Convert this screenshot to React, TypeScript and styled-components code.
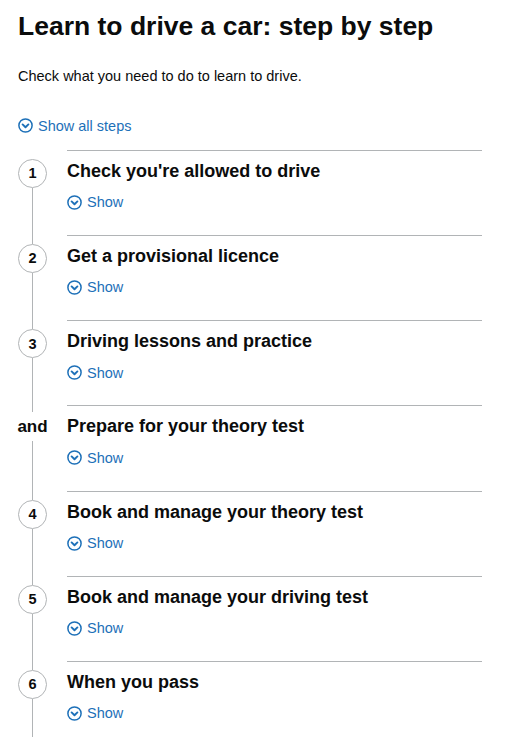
import React from "react"
import styled, { createGlobalStyle } from "styled-components"

const GlobalStyle = createGlobalStyle`
    body {
        margin: 0;
        background: #ffffff;
        font-family: "Liberation Sans", Arial, sans-serif;
        color: #0b0c0c;
    }
`

const Page = styled.div`
    padding: 0 28px 0 18px;
`

const Title = styled.h1`
    margin: 11px 0 0 0;
    font-size: 26.5px;
    line-height: 1.2;
    font-weight: 700;
`

const Lead = styled.p`
    margin: 23px 0 0 0;
    font-size: 14.5px;
    line-height: 20px;
`

const ShowLink = styled.a<{ $top?: string }>`
    display: flex;
    align-items: center;
    gap: 5px;
    margin-top: ${({ $top }) => $top || "0"};
    font-size: 14.5px;
    line-height: 20px;
    color: #1d70b8;
    text-decoration: none;
    cursor: pointer;
    width: max-content;
`

const Steps = styled.ol`
    list-style: none;
    margin: 14px 0 0 0;
    padding: 0;
`

const Step = styled.li`
    display: grid;
    grid-template-columns: 29px 1fr;
    column-gap: 20px;
`

const Rail = styled.div`
    display: flex;
    flex-direction: column;
    align-items: center;
`

const Segment = styled.div<{ $blank?: boolean; $size?: string }>`
    width: 1px;
    background: ${({ $blank }) => ($blank ? "transparent" : "#b1b4b6")};
    height: ${({ $size }) => $size || "auto"};
    flex: ${({ $size }) => ($size ? "none" : "1")};
`

const Number = styled.span`
    box-sizing: border-box;
    width: 29px;
    height: 29px;
    border: 1px solid #b1b4b6;
    border-radius: 50%;
    display: flex;
    align-items: center;
    justify-content: center;
    font-size: 14.5px;
    font-weight: 700;
    background: #fff;
`

const And = styled.span`
    height: 29px;
    display: flex;
    align-items: center;
    justify-content: center;
    white-space: nowrap;
    font-size: 17px;
    font-weight: 700;
`

const Body = styled.div`
    border-top: 1px solid #b1b4b6;
    padding: 8px 0 22.7px 0;
`

const StepTitle = styled.h2`
    margin: 0;
    font-size: 18px;
    line-height: 24px;
    font-weight: 700;
`

const ChevronIcon: React.FC = () => (
    <svg width="15" height="15" viewBox="0 0 15 15" aria-hidden="true">
        <circle cx="7.5" cy="7.5" r="6.6" fill="none" stroke="#1d70b8" strokeWidth="1.5" />
        <path d="M4.6 6.4 L7.5 9.2 L10.4 6.4" fill="none" stroke="#1d70b8" strokeWidth="1.9" strokeLinecap="round" strokeLinejoin="round" />
    </svg>
)

const steps: { label: string; title: string }[] = [
    { label: "1", title: "Check you're allowed to drive" },
    { label: "2", title: "Get a provisional licence" },
    { label: "3", title: "Driving lessons and practice" },
    { label: "and", title: "Prepare for your theory test" },
    { label: "4", title: "Book and manage your theory test" },
    { label: "5", title: "Book and manage your driving test" },
    { label: "6", title: "When you pass" },
]

export default function App() {
    return (
        <Page>
            <GlobalStyle />
            <Title>Learn to drive a car: step by step</Title>
            <Lead>Check what you need to do to learn to drive.</Lead>
            <ShowLink $top="30px">
                <ChevronIcon />
                Show all steps
            </ShowLink>
            <Steps>
                {steps.map((step, i) => (
                    <Step key={step.title}>
                        <Rail>
                            {step.label === "and" ? (
                                <>
                                    <Segment $size="7px" />
                                    <And>and</And>
                                </>
                            ) : (
                                <>
                                    <Segment $size="9px" $blank={i === 0} />
                                    <Number>{step.label}</Number>
                                </>
                            )}
                            <Segment />
                        </Rail>
                        <Body>
                            <StepTitle>{step.title}</StepTitle>
                            <ShowLink $top="9.5px">
                                <ChevronIcon />
                                Show
                            </ShowLink>
                        </Body>
                    </Step>
                ))}
            </Steps>
        </Page>
    )
}
